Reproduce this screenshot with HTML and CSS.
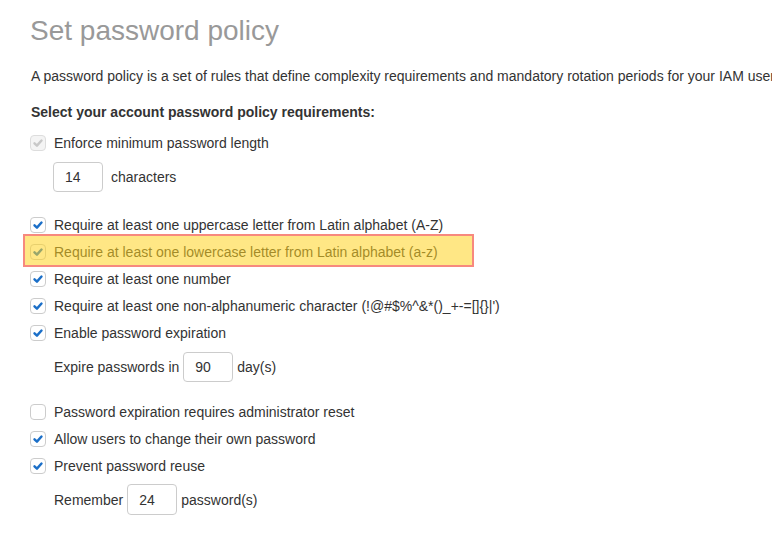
FILE: index.html
```html
<!DOCTYPE html>
<html lang="en">
<head>
<meta charset="utf-8">
<title>Set password policy</title>
<link rel="stylesheet" href="styles.css">
</head>
<body>
<div class="page">
  <h1 class="title">Set password policy</h1>
  <p class="desc">A password policy is a set of rules that define complexity requirements and mandatory rotation periods for your IAM users' passwords.</p>
  <h2 class="subtitle">Select your account password policy requirements:</h2>

  <div class="opts">
    <div class="row">
      <span class="cb cb-disabled"><svg viewBox="0 0 16 16"><path d="M4 8.3 L6.8 11 L12 5.2"/></svg></span>
      <span class="lbl">Enforce minimum password length</span>
    </div>
    <div class="sub sub-first gap-lg">
      <span class="inp">14</span>
      <span class="lbl">characters</span>
    </div>

    <div class="row">
      <span class="cb cb-on"><svg viewBox="0 0 16 16"><path d="M4 8.3 L6.8 11 L12 5.2"/></svg></span>
      <span class="lbl">Require at least one uppercase letter from Latin alphabet (A-Z)</span>
    </div>
    <div class="row row-hl">
      <span class="cb cb-on"><svg viewBox="0 0 16 16"><path d="M4 8.3 L6.8 11 L12 5.2"/></svg></span>
      <span class="lbl">Require at least one lowercase letter from Latin alphabet (a-z)</span>
      <span class="hl"></span>
    </div>
    <div class="row">
      <span class="cb cb-on"><svg viewBox="0 0 16 16"><path d="M4 8.3 L6.8 11 L12 5.2"/></svg></span>
      <span class="lbl">Require at least one number</span>
    </div>
    <div class="row">
      <span class="cb cb-on"><svg viewBox="0 0 16 16"><path d="M4 8.3 L6.8 11 L12 5.2"/></svg></span>
      <span class="lbl">Require at least one non-alphanumeric character (!@#$%^&amp;*()_+-=[]{}|')</span>
    </div>
    <div class="row">
      <span class="cb cb-on"><svg viewBox="0 0 16 16"><path d="M4 8.3 L6.8 11 L12 5.2"/></svg></span>
      <span class="lbl">Enable password expiration</span>
    </div>
    <div class="sub gap-md">
      <span class="lbl">Expire passwords in</span>
      <span class="inp">90</span>
      <span class="lbl">day(s)</span>
    </div>

    <div class="row">
      <span class="cb"></span>
      <span class="lbl">Password expiration requires administrator reset</span>
    </div>
    <div class="row">
      <span class="cb cb-on"><svg viewBox="0 0 16 16"><path d="M4 8.3 L6.8 11 L12 5.2"/></svg></span>
      <span class="lbl">Allow users to change their own password</span>
    </div>
    <div class="row">
      <span class="cb cb-on"><svg viewBox="0 0 16 16"><path d="M4 8.3 L6.8 11 L12 5.2"/></svg></span>
      <span class="lbl">Prevent password reuse</span>
    </div>
    <div class="sub sub-last">
      <span class="lbl">Remember</span>
      <span class="inp">24</span>
      <span class="lbl">password(s)</span>
    </div>
  </div>
</div>
</body>
</html>
```

FILE: styles.css
```css
html, body {
  margin: 0;
  padding: 0;
  background: #ffffff;
  overflow: hidden;
}

body {
  font-family: "Liberation Sans", Arial, sans-serif;
  font-size: 14px;
  color: #333333;
}

.page {
  padding: 0 0 0 30px;
  white-space: nowrap;
}

.title {
  margin: 15px 0 0 0;
  font-size: 28px;
  line-height: 32px;
  font-weight: normal;
  color: #999999;
}

.desc {
  margin: 19px 0 0 1px;
  line-height: 20px;
}

.subtitle {
  margin: 16px 0 0 1px;
  font-size: 14px;
  line-height: 20px;
  font-weight: bold;
  color: #333333;
}

.opts {
  margin-top: 7px;
  display: flex;
  flex-direction: column;
}

.row {
  position: relative;
  display: flex;
  align-items: center;
  height: 27px;
  gap: 8px;
}

.cb {
  box-sizing: border-box;
  width: 16px;
  height: 16px;
  border: 1px solid #cccccc;
  border-radius: 4px;
  background: #ffffff;
  display: flex;
  align-items: center;
  justify-content: center;
  flex: none;
}

.cb svg {
  width: 14px;
  height: 14px;
  fill: none;
  stroke-width: 2.8;
  stroke-linecap: round;
  stroke-linejoin: round;
}

.cb-on svg {
  stroke: #1b6fc8;
}

.cb-disabled {
  border-color: #dddddd;
  background: #f4f4f4;
}

.cb-disabled svg {
  stroke: #c8c8c8;
}

.hl {
  position: absolute;
  left: -7px;
  top: -4px;
  width: 447px;
  height: 29px;
  border: 2px solid #f7897e;
  background: rgba(255, 212, 33, 0.55);
  pointer-events: none;
}

.sub {
  display: flex;
  align-items: center;
  gap: 4px;
  padding-left: 24px;
  margin-top: 6px;
  margin-bottom: 0;
  height: 30px;
}

.sub-first {
  padding-left: 23px;
  gap: 8px;
}

.sub-last {
  margin-top: 5px;
  height: 31px;
}

.gap-lg {
  margin-bottom: 19px;
}

.gap-md {
  margin-bottom: 16px;
}

.inp {
  box-sizing: border-box;
  width: 50px;
  height: 100%;
  border: 1px solid #cccccc;
  border-radius: 4px;
  padding-left: 11px;
  display: flex;
  align-items: center;
  color: #333333;
}
```
